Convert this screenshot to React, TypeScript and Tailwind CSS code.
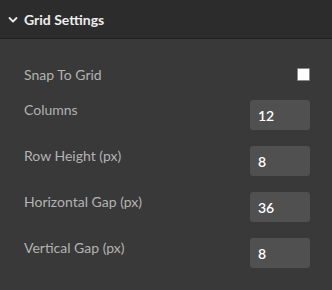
const rows = [
  { label: "Columns", value: "12" },
  { label: "Row Height (px)", value: "8" },
  { label: "Horizontal Gap (px)", value: "36" },
  { label: "Vertical Gap (px)", value: "8" },
]

export default function App() {
  return (
    <div className="w-[332px] h-[290px] bg-[#393939] font-['Lato',sans-serif]">
      <div className="h-[39px] bg-[#2c2c2c] border-b border-[#1f1f1f] flex items-center pl-[8px]">
        <svg width="10" height="8" viewBox="0 0 10 8" className="mt-[1px]">
          <polyline points="1.5,2 5,5.5 8.5,2" fill="none" stroke="#e8e8e8" strokeWidth="1.8" strokeLinecap="round" strokeLinejoin="round" />
        </svg>
        <span className="ml-[6px] text-[14px] font-bold text-[#ededed]">Grid Settings</span>
      </div>

      <div className="pl-[24px] pr-[22px] pt-[22px] flex flex-col">
        <div className="h-[26px] flex items-center justify-between">
          <span className="text-[14px] text-[#b3b3b3]">Snap To Grid</span>
          <span className="w-[13px] h-[13px] bg-white border border-[#8a8a8a] rounded-[1px]" />
        </div>

        <div className="mt-[13px] flex flex-col gap-[16px]">
          {rows.map((r) => (
            <div key={r.label} className="flex items-start justify-between">
              <span className="text-[14px] leading-5 text-[#b3b3b3]">{r.label}</span>
              <div className="w-[60px] h-[30px] rounded-[3px] bg-[#505050] flex items-center pl-[8px] text-[14px] font-semibold text-white">
                {r.value}
              </div>
            </div>
          ))}
        </div>
      </div>
    </div>
  )
}
